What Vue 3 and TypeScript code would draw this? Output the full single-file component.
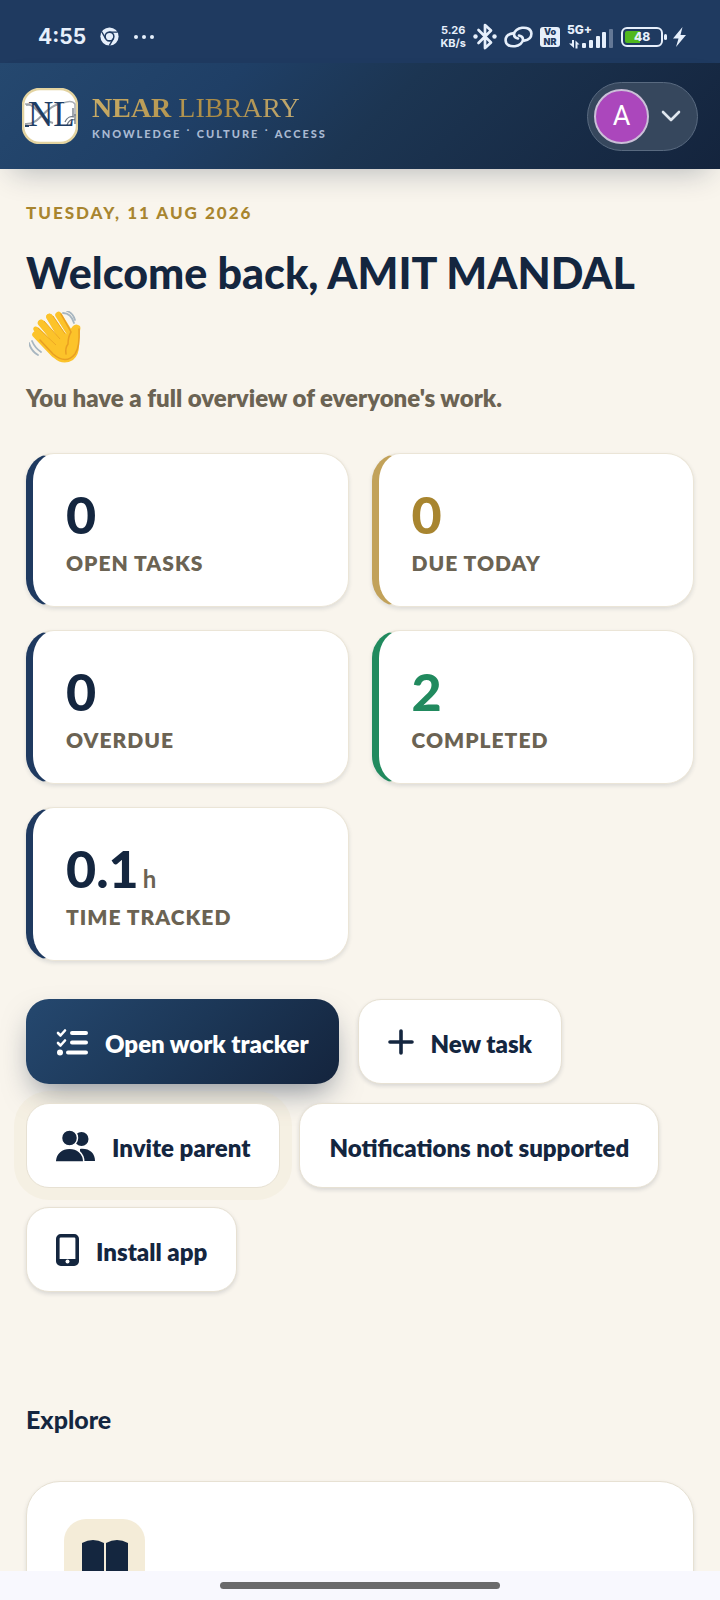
<script setup lang="ts">
interface Stat {
  value: string
  unit?: string
  label: string
  tone: 'navy' | 'gold' | 'green'
}

const stats: Stat[] = [
  { value: '0', label: 'Open tasks', tone: 'navy' },
  { value: '0', label: 'Due today', tone: 'gold' },
  { value: '0', label: 'Overdue', tone: 'navy' },
  { value: '2', label: 'Completed', tone: 'green' },
  { value: '0.1', unit: 'h', label: 'Time tracked', tone: 'navy' },
]
</script>

<template>
  <div class="screen">
    <div class="status">
      <div class="status-side">
        <span class="clock">4:55</span>
        <svg width="19" height="19" viewBox="0 0 20 20" aria-hidden="true">
          <circle cx="10" cy="10" r="9.6" fill="#e6effb" />
          <circle cx="10" cy="10" r="4.6" fill="none" stroke="#1f3a60" stroke-width="1.6" />
          <path d="M10 5.4H18.6M6 12.3L1.8 5M14 12.3L9.8 19.6" stroke="#1f3a60" stroke-width="1.5" fill="none" />
        </svg>
        <svg width="22" height="6" viewBox="0 0 22 6" fill="#e6effb" aria-hidden="true">
          <circle cx="3" cy="3" r="2" /><circle cx="11" cy="3" r="2" /><circle cx="19" cy="3" r="2" />
        </svg>
      </div>
      <div class="status-side right">
        <span class="rate">5.26<br />KB/s</span>
        <svg width="24" height="27" viewBox="0 0 24 27" fill="none" stroke="#e6effb" stroke-width="2.700" aria-hidden="true">
          <path d="M5.5 7L18 19.5L12 25V2L18 7.500L5.500 20" stroke-linejoin="round" stroke-linecap="round" />
          <circle cx="2.500" cy="13.500" r="2.200" fill="#e6effb" stroke="none" />
          <circle cx="21.500" cy="13.500" r="2.200" fill="#e6effb" stroke="none" />
        </svg>
        <svg width="29" height="22" viewBox="0 0 29 22" fill="none" stroke="#e6effb" stroke-width="2.600" stroke-linecap="round" aria-hidden="true">
          <path d="M9 7.400C4 8 1.500 11 1.600 14.500C1.800 19 6 20.800 11 20.200C15 19.700 19 17 19 13.500C19 11.500 17.500 10 15 9.500" />
          <path d="M20 14.600C25 14 27.500 11 27.400 7.500C27.200 3 23 1.200 18 1.800C14 2.300 10 5 10 8.500C10 10.500 11.500 12 14 12.500" />
        </svg>
        <span class="vonr"><span>Vo</span><span>NR</span></span>
        <span class="signal">
          <span class="net">5G+</span>
          <svg width="47" height="26" viewBox="0 0 47 26" fill="#e6effb" aria-hidden="true">
            <path d="M5 16H7V24L2 19.500H5ZM8.500 24.500V16.500L12.500 20.500H10.500V24.500Z" />
            <rect x="15" y="19" width="4" height="5" rx="1" />
            <rect x="22" y="16" width="4" height="8" rx="1" />
            <rect x="29" y="12" width="4" height="12" rx="1" />
            <rect x="35" y="8" width="4" height="16" rx="1" />
            <rect x="42" y="5" width="4" height="19" rx="1" opacity=".35" />
          </svg>
        </span>
        <span class="battery">48</span>
        <svg width="13" height="20" viewBox="0 0 13 20" fill="#e6effb" aria-hidden="true">
          <path d="M9.500 0L0 11.500H5.500L3 20L13 8H7.500Z" />
        </svg>
      </div>
    </div>

    <header class="header">
      <a class="brand" href="#">
        <svg width="56" height="56" viewBox="0 0 56 56" role="img" aria-label="Near Library logo">
          <rect x="1" y="1" width="54" height="54" rx="17" fill="#fff" stroke="#e3d3a0" stroke-width="2.500" />
          <g fill="none">
            <path d="M3 16H8M41 15C46 13 51 13 53 16V28" stroke="#a9adb4" stroke-width="1.500" />
            <path d="M4 17C14 14 18 32 31 35M3 36C18 37 22 19 37 16" stroke="#9da2a9" stroke-width="2" />
            <path d="M43 34C45 29 49 28 52 29M45 37C47 32 50 31 53 32M51 29V20M53 36V26" stroke="#6f7884" stroke-width="1.300" />
            <path d="M3 38H7" stroke="#234064" stroke-width="2" />
          </g>
          <text class="monogram" x="6" y="38">NL</text>
        </svg>
        <span class="brand-copy">
          <span class="brand-name"><b>NEAR</b> LIBRARY</span>
          <span class="brand-tag">KNOWLEDGE ˙ CULTURE ˙ ACCESS</span>
        </span>
      </a>
      <button class="account" type="button" aria-label="Account menu">
        <span class="avatar">A</span>
        <svg width="20" height="12" viewBox="0 0 20 12" fill="none" stroke="#dfe6ee" stroke-width="2.600" stroke-linecap="round" stroke-linejoin="round" aria-hidden="true">
          <path d="M2 2L10 10L18 2" />
        </svg>
      </button>
    </header>

    <main class="content">
      <p class="date">TUESDAY, 11 AUG 2026</p>
      <h1>
        Welcome back, AMIT MANDAL
        <svg class="wave" width="56" height="56" viewBox="0 0 56 56" role="img" aria-label="Waving hand">
          <path d="M5.500 25L23 41L18 33L5 20Q3 17 6 15.500Q8 15 10 17L20 27L10 14Q8 10 11 9Q13 8 15 10L27 24L18 8Q16 4 19 3Q22 2 24 5L36 22Q39 25 40 20L44 15Q47 12 51 15Q52 17 51 20L50 35Q50 44 44 49Q34 55 25 47L7 27Z" fill="#fcc32a" />
          <path d="M6.500 23.500L25 43M12 12L29 31M20.500 6L37 29M29.500 4L42 24" stroke="#fcc32a" stroke-width="6.500" stroke-linecap="round" />
          <path d="M32 3L42 21Q39 26 39 33Q36 37 37 43M11 29L24 43Q37 54 46 43Q51 36 50 18" fill="none" stroke="#e99f22" stroke-width="1.500" stroke-linecap="round" />
          <path d="M9 17L27 34M15 10L31 28M24 5L36 23" stroke="#eda825" stroke-width="1" />
          <path d="M34 2Q42 2 45 12M38 0Q44 2 46 9M0 32Q2 40 9 44M3 30Q6 37 12 41" fill="none" stroke="#a8b6c0" stroke-width="1.800" stroke-linecap="round" />
        </svg>
      </h1>
      <p class="lede">You have a full overview of everyone's work.</p>

      <section class="stats" aria-label="Task summary">
        <article v-for="stat in stats" :key="stat.label" class="stat" :class="stat.tone">
          <p class="value">{{ stat.value }}<small v-if="stat.unit">{{ stat.unit }}</small></p>
          <p class="label">{{ stat.label }}</p>
        </article>
      </section>

      <div class="actions">
        <button class="action primary" type="button">
          <svg width="33" height="28" viewBox="0 0 33 28" fill="none" stroke="#fff" stroke-linecap="round" stroke-linejoin="round" aria-hidden="true">
            <path d="M16 5H30M16 14.500H30M12 24.500H30" stroke-width="4" />
            <path d="M2 5L4.500 7.500L9 2.500M2 15L4.500 17.500L9 12.500" stroke-width="2.600" />
            <circle cx="4" cy="24.500" r="3" fill="#fff" stroke="none" />
          </svg>
          <span>Open work tracker</span>
        </button>
        <button class="action" type="button">
          <svg width="26" height="26" viewBox="0 0 26 26" fill="none" stroke="#14263f" stroke-width="3.600" stroke-linecap="round" aria-hidden="true">
            <path d="M13 2V24M2 13H24" />
          </svg>
          <span>New task</span>
        </button>
        <button class="action halo" type="button">
          <svg width="39" height="32" viewBox="0 0 39 32" fill="#14263f" aria-hidden="true">
            <circle cx="25.500" cy="9" r="7" />
            <path d="M24 19C33 18 39 23 39 31H24Z" />
            <circle cx="13.500" cy="8" r="8" stroke="#fff" stroke-width="1.500" />
            <path d="M-.8 32C-.8 13.500 27.800 13.500 27.800 32Z" stroke="#fff" stroke-width="1.500" />
          </svg>
          <span>Invite parent</span>
        </button>
        <button class="action" type="button"><span>Notifications not supported</span></button>
        <button class="action" type="button">
          <svg width="23" height="32" viewBox="0 0 23 32" aria-hidden="true">
            <rect x="1.800" y="1.800" width="19.400" height="28.400" rx="3" fill="none" stroke="#14263f" stroke-width="3.600" />
            <path d="M2 25H21V30H2Z" fill="#14263f" />
            <circle cx="11.500" cy="27.500" r="2" fill="#fff" />
          </svg>
          <span>Install app</span>
        </button>
      </div>

      <h2>Explore</h2>
      <a class="explore-card" href="#" aria-label="Library">
        <span class="tile">
          <svg width="46" height="40" viewBox="0 0 46 40" fill="#14263f" aria-hidden="true">
            <path d="M0 3Q11 -3 22 3V38Q11 33 0 38ZM24 3Q35 -3 46 3V38Q35 33 24 38Z" />
          </svg>
        </span>
      </a>
    </main>

    <div class="gesture"><span></span></div>
  </div>
</template>

<style>
body {
  background: #f9f5ed;
}
</style>

<style scoped>
* {
  box-sizing: border-box;
}
p,
h1,
h2 {
  margin: 0;
}
button {
  font: inherit;
}
svg {
  flex: none;
}
.screen {
  display: flex;
  flex-direction: column;
  height: 100vh;
  overflow: hidden;
  font-family: Lato, "Open Sans", sans-serif;
  color: #14263f;
  background: #f9f5ed;
}
.status {
  flex: none;
  height: 63px;
  padding: 10px 34px 0 38px;
  display: flex;
  align-items: center;
  justify-content: space-between;
  background: #1f3a60;
  color: #e6effb;
}
.status-side {
  display: flex;
  align-items: center;
  gap: 14px;
}
.status-side.right {
  gap: 7px;
}
.clock {
  font-family: Inter, sans-serif;
  font-size: 21px;
  line-height: 24px;
  font-weight: 700;
}
.rate {
  font: 700 11px/13px Inter, sans-serif;
  text-align: center;
}
.vonr {
  display: grid;
  width: 20px;
  height: 20px;
  border-radius: 3px;
  background: #e6effb;
  color: #1f3a60;
  font: 900 9px/10px Inter, sans-serif;
  text-align: center;
}
.signal {
  position: relative;
  display: flex;
}
.net {
  position: absolute;
  left: 0;
  top: 0;
  font: 800 12px/12px Inter, sans-serif;
}
.battery {
  position: relative;
  width: 42px;
  height: 20px;
  margin-right: 3px;
  border: 2px solid #e6effb;
  border-radius: 6px;
  background: linear-gradient(90deg, #50b81e 45%, transparent 45%) content-box;
  padding: 2px;
  font: 800 12px/12px Inter, sans-serif;
  text-align: center;
}
.battery::after {
  content: "";
  position: absolute;
  right: -6px;
  top: 5px;
  width: 3px;
  height: 6px;
  border-radius: 2px;
  background: #e6effb;
}
.header {
  position: relative;
  flex: none;
  display: flex;
  align-items: center;
  justify-content: space-between;
  height: 106px;
  padding: 0 22px;
  background: linear-gradient(135deg, #25486f 0%, #1f3f66 30%, #1c3552 52%, #14243d 100%);
  box-shadow: 0 14px 30px -12px rgba(20, 36, 61, 0.3);
}
.brand {
  display: flex;
  align-items: center;
  gap: 14px;
  text-decoration: none;
}
.monogram {
  font: 35px "Liberation Serif", serif;
  fill: #1f3d63;
}
.brand-copy {
  display: flex;
  flex-direction: column;
  gap: 3px;
  padding-top: 3px;
}
.brand-name {
  font: 28px/30px "Liberation Serif", serif;
  color: transparent;
  background: linear-gradient(100deg, #c9ac66, #a98a45 55%, #cdb885);
  background-clip: text;
}
.brand-tag {
  font-size: 11px;
  line-height: 16px;
  font-weight: 900;
  letter-spacing: 2px;
  color: #a9b9d2;
}
.account {
  display: flex;
  align-items: center;
  gap: 12px;
  height: 69px;
  padding: 0 16px 0 6px;
  border: 1px solid #596a80;
  border-radius: 35px;
  background: #36475d;
}
.avatar {
  display: grid;
  place-items: center;
  width: 55px;
  height: 55px;
  border: 2px solid #cbbfd8;
  border-radius: 50%;
  background: #ab47bc;
  color: #fff;
  font: 27px/1 Roboto, sans-serif;
}
.content {
  flex: 1;
  min-height: 0;
  overflow: hidden;
  padding: 32px 26px 0;
}
.date {
  font-size: 17px;
  line-height: 24px;
  font-weight: 900;
  letter-spacing: 2px;
  color: #a8852f;
}
h1 {
  margin-top: 16px;
  font-size: 43px;
  line-height: 64px;
  font-weight: 900;
}
.wave {
  margin-left: 3px;
  vertical-align: -14px;
}
.lede {
  margin-top: 12px;
  font-size: 24px;
  line-height: 34px;
  font-weight: 800;
  color: #6b6353;
}
.stats {
  display: grid;
  grid-template-columns: 1fr 1fr;
  gap: 23px;
  margin-top: 38px;
}
.stat {
  height: 154px;
  padding: 34px 24px 0 33px;
  border: 1px solid #ebe5d7;
  border-left: 7px solid #1f3a60;
  border-radius: 28px;
  background: #fff;
  box-shadow: 0 2px 4px rgba(20, 38, 63, 0.12);
}
.value {
  font-size: 52px;
  line-height: 52px;
  font-weight: 900;
}
.value small {
  margin-left: 4px;
  font-size: 24px;
  line-height: 24px;
  font-weight: 700;
  color: #6b6353;
}
.label {
  margin-top: 10px;
  font-size: 21px;
  line-height: 26px;
  font-weight: 800;
  letter-spacing: 1px;
  text-transform: uppercase;
  color: #6b6353;
}
.gold {
  border-left-color: #c2a25a;
}
.gold .value {
  color: #a8852f;
}
.green {
  border-left-color: #218a5e;
}
.green .value {
  color: #218a5e;
}
.actions {
  display: flex;
  flex-wrap: wrap;
  gap: 19px;
  margin-top: 38px;
}
.action {
  display: flex;
  align-items: center;
  gap: 17px;
  height: 85px;
  padding: 0 29px;
  border: 1px solid #e7e1d3;
  border-radius: 23px;
  background: #fff;
  box-shadow: 0 2px 4px rgba(20, 38, 63, 0.14);
  color: #14263f;
  font-size: 24px;
  font-weight: 800;
}
.action span {
  padding-top: 4px;
}
.primary {
  gap: 16px;
  border-color: transparent;
  background: linear-gradient(135deg, #25486f, #1c3757 50%, #14243d) border-box;
  box-shadow: 0 14px 30px -8px rgba(20, 36, 61, 0.5);
  color: #fff;
}
.halo {
  box-shadow: 0 0 0 12px rgba(226, 208, 160, 0.12);
}
h2 {
  margin-top: 110px;
  font-size: 25px;
  line-height: 34px;
  font-weight: 900;
}
.explore-card {
  display: block;
  height: 300px;
  margin-top: 45px;
  padding: 37px;
  border: 1px solid #e7e1d3;
  border-radius: 34px;
  background: #fff;
  box-shadow: 0 2px 4px rgba(20, 38, 63, 0.12);
}
.tile {
  display: grid;
  place-items: center;
  width: 81px;
  height: 81px;
  border-radius: 22px;
  background: #f4ecd8;
}
.gesture {
  position: relative;
  flex: none;
  display: grid;
  place-items: center;
  height: 29px;
  background: #f8f8fe;
}
.gesture span {
  width: 39%;
  height: 7px;
  border-radius: 4px;
  background: #6a6a6b;
}
</style>
